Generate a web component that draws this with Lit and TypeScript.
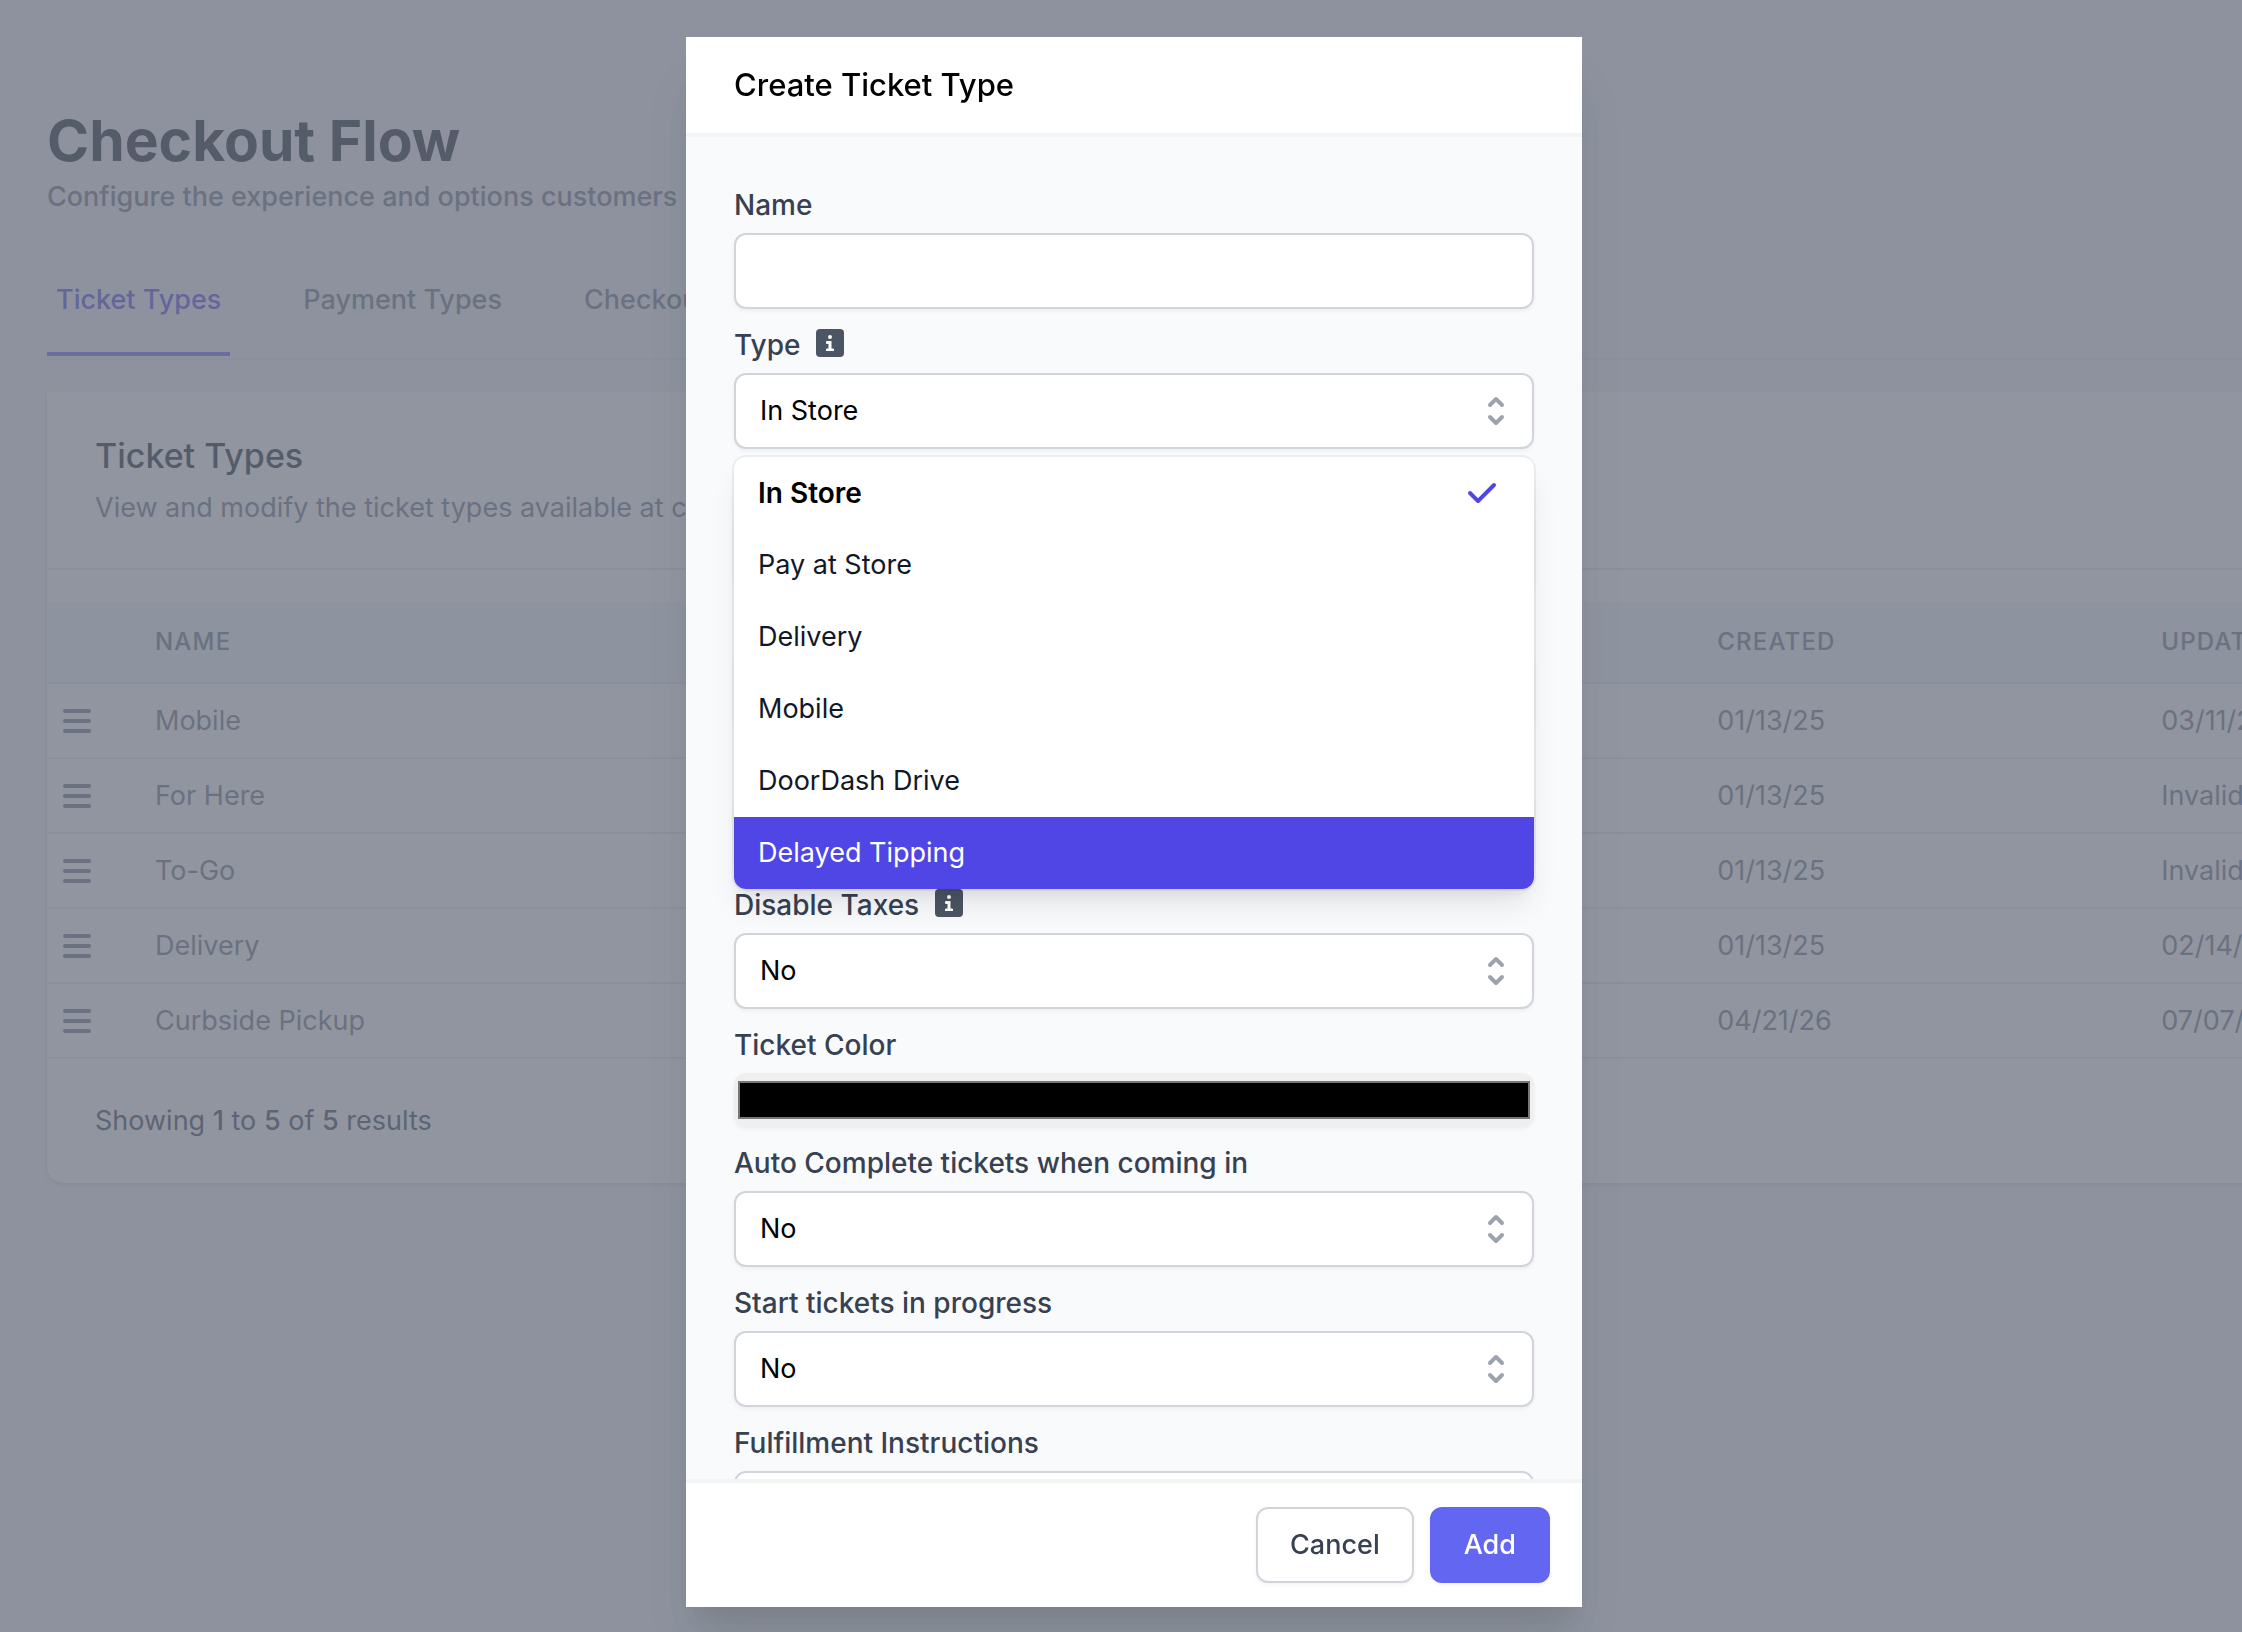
import { LitElement, html, css, svg, nothing } from "lit";
import { customElement, property, state } from "lit/decorators.js";
import { classMap } from "lit/directives/class-map.js";

interface TicketRow {
  name: string;
  created: string;
  updated: string;
}

const ROWS: TicketRow[] = [
  { name: "Mobile", created: "01/13/25", updated: "03/11/25" },
  { name: "For Here", created: "01/13/25", updated: "Invalid Date" },
  { name: "To-Go", created: "01/13/25", updated: "Invalid Date" },
  { name: "Delivery", created: "01/13/25", updated: "02/14/25" },
  { name: "Curbside Pickup", created: "04/21/26", updated: "07/07/26" },
];

const TYPES = ["In Store", "Pay at Store", "Delivery", "Mobile", "DoorDash Drive", "Delayed Tipping"];
const YES_NO = ["No", "Yes"];

const selectorPath = svg`<path fill-rule="evenodd" clip-rule="evenodd" d="M10 3a1 1 0 01.707.293l3 3a1 1 0 01-1.414 1.414L10 5.414 7.707 7.707a1 1 0 01-1.414-1.414l3-3A1 1 0 0110 3zm-3.707 9.293a1 1 0 011.414 0L10 14.586l2.293-2.293a1 1 0 011.414 1.414l-3 3a1 1 0 01-1.414 0l-3-3a1 1 0 010-1.414z"/>`;
const checkPath = svg`<path fill-rule="evenodd" clip-rule="evenodd" d="M16.707 5.293a1 1 0 010 1.414l-8 8a1 1 0 01-1.414 0l-4-4a1 1 0 011.414-1.414L8 12.586l7.293-7.293a1 1 0 011.414 0z"/>`;

const base = css`
  *, *::before, *::after { box-sizing: border-box; }
  h1, h2, p, ul { margin: 0; padding: 0; }
  svg { display: block; flex: none; }
`;

/** Page behind the dialog: heading, tabs and the ticket type table. */
@customElement("checkout-page")
export class CheckoutPage extends LitElement {
  static styles = [base, css`
    :host { display: block; color: #6b7280; font-size: 27px; line-height: 40px; }
    .page { padding: 105px 0 64px 47px; overflow: hidden; }
    .heading { color: #111827; font-size: 57px; line-height: 72px; font-weight: 700; }
    .lead { font-weight: 500; }
    .tabs { display: flex; gap: 64px; margin-top: 63px; padding-bottom: 2px; border-bottom: 2px solid #e5e7eb; }
    .tab { padding: 0 9px 32px; border-bottom: 4px solid transparent; color: inherit; font-weight: 500; text-decoration: none; }
    .tab.current { color: #4f46e5; border-color: #6366f1; }
    .card { width: 116%; margin-top: 32px; background: #fff; border-radius: 0 0 16px 16px; box-shadow: 0 2px 6px rgba(0, 0, 0, .1), 0 2px 4px rgba(0, 0, 0, .06); }
    .card-head { display: grid; gap: 8px; padding: 40px 48px; border-bottom: 2px solid #e5e7eb; }
    .card-title { color: #111827; font-size: 34px; line-height: 48px; font-weight: 500; }
    .table { width: 100%; margin-top: 32px; table-layout: fixed; border-spacing: 0; }
    .grip-col { width: 96px; }
    .date-col { width: 444px; }
    th, td { padding: 0 12px; border-bottom: 2px solid #e5e7eb; text-align: left; font-weight: 400; }
    th { height: 82px; background: #f1f5f9; font-size: 24px; line-height: 32px; font-weight: 500; letter-spacing: 0.05em; text-transform: uppercase; }
    td { height: 75px; }
    .grip { display: block; padding: 0; border: 0; background: none; color: inherit; }
    .foot { padding: 42px 48px; color: #374151; }
    .foot b { font-weight: 500; }
  `];

  render() {
    return html`
      <main class="page">
        <h1 class="heading">Checkout Flow</h1>
        <p class="lead">Configure the experience and options customers see</p>
        <nav class="tabs" aria-label="Checkout flow">
          ${["Ticket Types", "Payment Types", "Checkout"].map((t, i) => html`
            <a href="#" class=${classMap({ tab: true, current: i === 0 })}>${t}</a>`)}
        </nav>
        <section class="card">
          <header class="card-head">
            <h2 class="card-title">Ticket Types</h2>
            <p>View and modify the ticket types available at checkout</p>
          </header>
          <table class="table">
            <colgroup><col class="grip-col"><col><col class="date-col"><col class="date-col"></colgroup>
            <thead><tr><th></th><th>Name</th><th>Created</th><th>Updated</th></tr></thead>
            <tbody>
              ${ROWS.map((r) => html`<tr>
                <td><button class="grip" aria-label="Reorder ${r.name}">
                  <svg width="36" height="36" viewBox="0 0 36 36" fill="none" stroke="currentColor" stroke-width="4" stroke-linecap="round"><path d="M6 8h24M6 18h24M6 28h24"/></svg>
                </button></td>
                <td>${r.name}</td><td>${r.created}</td><td>${r.updated}</td>
              </tr>`)}
            </tbody>
          </table>
          <footer class="foot">Showing <b>1</b> to <b>5</b> of <b>5</b> results</footer>
        </section>
      </main>`;
  }
}

/** Labelled drop-down; while open it shows its options in a floating list. */
@customElement("select-field")
export class SelectField extends LitElement {
  @property() label = "";
  @property({ type: Boolean }) hint = false;
  @property({ type: Boolean }) open = false;
  @property({ attribute: false }) options: string[] = YES_NO;
  @state() private value = 0;
  @state() private active = 5;

  static styles = [base, css`
    :host { display: block; position: relative; font-size: 27px; }
    .row { display: flex; gap: 16px; height: 40px; }
    .label { color: #374151; font-size: 28px; font-weight: 500; }
    .hint { margin-top: 4px; }
    .box { display: grid; align-items: center; margin-top: 8px; }
    .control { grid-area: 1 / 1; width: 100%; height: 76px; padding: 0 80px 0 24px; appearance: none; border: 2px solid #d1d5db; border-radius: 12px; background: #fff; color: #000; font: inherit; outline: none; box-shadow: 0 2px 4px rgba(0, 0, 0, .05); }
    .arrows { grid-area: 1 / 1; justify-self: end; margin-right: 18px; color: #9ca3af; pointer-events: none; }
    .menu { position: absolute; z-index: 10; top: 100%; left: 0; right: 0; margin-top: 8px; overflow: hidden; list-style: none; background: #fff; border-radius: 12px; color: #111827;
      box-shadow: 0 0 0 2px rgba(0, 0, 0, .05), 0 20px 30px -6px rgba(0, 0, 0, .1), 0 8px 12px -4px rgba(0, 0, 0, .05); }
    .option { display: flex; align-items: center; justify-content: space-between; height: 72px; padding: 0 32px 0 24px; }
    .option.selected { color: #000; font-size: 28px; font-weight: 600; }
    .option.active { background: #4f46e5; color: #fff; }
    .check { color: #4f46e5; }
  `];

  render() {
    return html`
      <div class="row">
        <label class="label" for="control">${this.label}</label>
        ${this.hint ? html`<svg class="hint" width="28" height="28" viewBox="0 0 28 28" role="img" aria-label="More information">
          <rect width="28" height="28" rx="4" fill="#4b5563"/>
          <g fill="#fff"><circle cx="14" cy="8" r="2"/><path d="M11 12h4.500v7.500h1.500a1 1 0 0 1 1 1v1.500h-8v-1.500a1 1 0 0 1 1-1h1.500v-4.500h-1.500a1 1 0 0 1-1-1v-1a1 1 0 0 1 1-1z"/></g>
        </svg>` : nothing}
      </div>
      <div class="box">
        <select id="control" class="control" @change=${(e: Event) => (this.value = (e.target as HTMLSelectElement).selectedIndex)}>
          ${this.options.map((o, i) => html`<option ?selected=${i === this.value}>${o}</option>`)}
        </select>
        <svg class="arrows" width="40" height="40" viewBox="0 0 20 20" fill="currentColor">${selectorPath}</svg>
      </div>
      ${this.open ? html`<ul class="menu" role="listbox" aria-label=${this.label}>
        ${this.options.map((o, i) => html`
          <li role="option" aria-selected=${i === this.value ? "true" : "false"}
            class=${classMap({ option: true, selected: i === this.value, active: i === this.active })}
            @mouseenter=${() => (this.active = i)}
            @click=${() => { this.value = i; this.open = false; }}>
            ${o}
            ${i === this.value ? html`<svg class="check" width="40" height="40" viewBox="0 0 20 20" fill="currentColor">${checkPath}</svg>` : nothing}
          </li>`)}
      </ul>` : nothing}`;
  }
}

@customElement("ticket-dialog")
export class TicketDialog extends LitElement {
  static styles = [base, css`
    :host { display: flex; flex-direction: column; width: 896px; max-width: 100%; min-height: 0; font-size: 27px; line-height: 40px;
      background: #fff; box-shadow: 0 40px 50px -10px rgba(0, 0, 0, .1), 0 20px 20px -10px rgba(0, 0, 0, .06); }
    .head { padding: 24px 48px; color: #000; font-size: 31px; line-height: 48px; border-bottom: 4px solid #f3f4f6; }
    .title { font: inherit; font-weight: 500; }
    .body { flex: 1; display: flex; flex-direction: column; gap: 16px; min-height: 0; padding: 48px; overflow-y: auto; scrollbar-width: none; background: #f9fafc; }
    .body > * { flex: none; }
    .field { display: grid; gap: 8px; }
    .label { color: #374151; font-size: 28px; font-weight: 500; }
    .input { width: 100%; height: 76px; padding: 16px 24px; border: 2px solid #d1d5db; border-radius: 12px; background: #fff; font: inherit; outline: none; resize: none; box-shadow: 0 2px 4px rgba(0, 0, 0, .05); }
    .area { height: 160px; }
    .color { width: 100%; height: 54px; padding: 0; border: 0; border-radius: 12px; appearance: none; background: #efefef; box-shadow: 0 2px 4px rgba(0, 0, 0, .05); }
    .color::-webkit-color-swatch-wrapper { padding: 8px 4px; }
    .color::-webkit-color-swatch { border: 2px solid #777; border-radius: 0; }
    .foot { display: flex; justify-content: flex-end; gap: 16px; padding: 24px 32px; border-top: 4px solid #f3f4f6; }
    .btn { height: 76px; padding: 0 32px; border: 2px solid #d1d5db; border-radius: 12px; background: #fff; color: #374151; font: inherit; font-weight: 500; box-shadow: 0 2px 4px rgba(0, 0, 0, .05); }
    .btn.primary { border-color: #6366f1; background: #6366f1; color: #fff; }
  `];

  render() {
    return html`
      <header class="head"><h2 class="title">Create Ticket Type</h2></header>
      <div class="body">
        <div class="field">
          <label class="label" for="name">Name</label>
          <input class="input" id="name" type="text">
        </div>
        <select-field label="Type" hint open .options=${TYPES}></select-field>
        <select-field label="Enabled"></select-field>
        <select-field label="Require Name"></select-field>
        <select-field label="Require Phone"></select-field>
        <select-field label="Disable Taxes" hint></select-field>
        <div class="field">
          <label class="label" for="color">Ticket Color</label>
          <input class="color" id="color" type="color" value="#000000">
        </div>
        <select-field label="Auto Complete tickets when coming in"></select-field>
        <select-field label="Start tickets in progress"></select-field>
        <div class="field">
          <label class="label" for="instructions">Fulfillment Instructions</label>
          <textarea class="input area" id="instructions"></textarea>
        </div>
      </div>
      <footer class="foot">
        <button class="btn" type="button">Cancel</button>
        <button class="btn primary" type="button">Add</button>
      </footer>`;
  }
}

@customElement("app-root")
export class AppRoot extends LitElement {
  static styles = [base, css`
    :host { display: block; height: 100vh; overflow: hidden; background: #f3f4f6; font-family: Inter, "Liberation Sans", sans-serif; }
    .overlay { position: fixed; inset: 0; display: flex; justify-content: center; padding: 37px 0 25px 26px; background: rgba(107, 114, 128, .75); }
  `];

  render() {
    return html`
      <checkout-page></checkout-page>
      <div class="overlay">
        <ticket-dialog role="dialog" aria-modal="true" aria-label="Create Ticket Type"></ticket-dialog>
      </div>`;
  }
}
